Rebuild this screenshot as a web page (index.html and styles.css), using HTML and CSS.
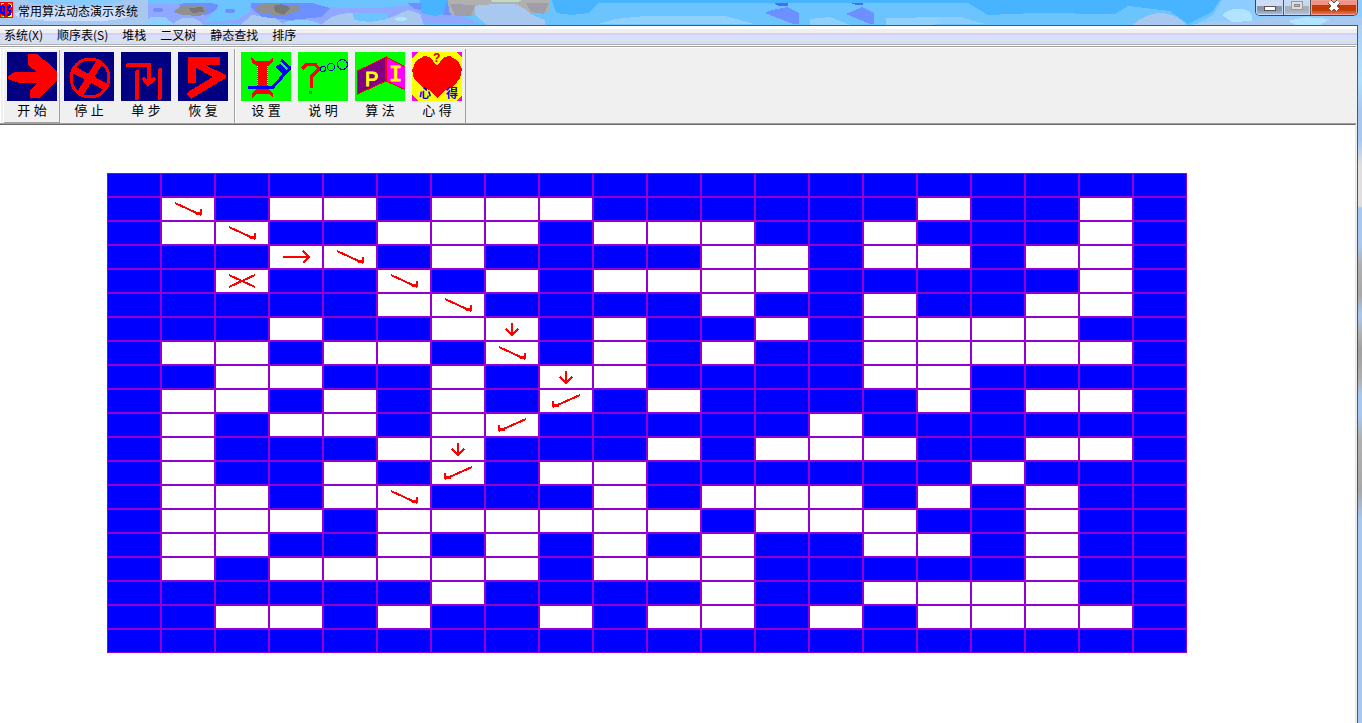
FILE: index.html
```html
<!DOCTYPE html>
<html lang="zh-CN">
<head>
<meta charset="utf-8">
<title>常用算法动态演示系统</title>
<link rel="stylesheet" href="styles.css">
</head>
<body>
<div class="desktop">
  <header class="titlebar">
    <svg class="glass" viewBox="0 0 1362 25" preserveAspectRatio="none" aria-hidden="true">
      <rect width="1362" height="25" fill="#6cc4ff"/>
      <path fill="#a8c8f0" d="M0 0H148V25H0z"/>
      <path fill="#88ccff" d="M25 0H125Q110 8 60 4Q40 6 25 0z"/>
      <path fill="#cfe0fb" d="M14 14Q30 4 70 7Q130 5 132 14Q125 22 80 21Q20 22 14 14z"/>
      <path fill="#90a8ff" d="M148 4H195L215 12L250 6L330 7Q360 10 400 6L440 5L480 24H148z"/>
      <path fill="#6cc4ff" d="M218 4H250V12L236 20L205 22L212 14z"/>
      <path fill="#a8c8f0" d="M172 25Q188 10 204 25zM240 25L252 15L275 18L285 25z"/>
      <path fill="#6c90ff" d="M178 4Q200 1 217 4Q221 10 206 15L188 12zM251 3H312L330 8L322 17L290 20L262 17L251 8z"/>
      <ellipse cx="158" cy="10" rx="5" ry="2" fill="#6c90ff"/>
      <ellipse cx="230" cy="11" rx="5" ry="2" fill="#6c90ff"/>
      <path fill="#909090" d="M173 12L181 6H203L207 11L200 16L182 15zM254 8L262 4L300 5L300 10L283 16L261 13z"/>
      <path fill="#787878" d="M189 8L203 7L204 12L192 13zM274 6Q283 2 290 8L284 15L275 12z"/>
      <path fill="#90d0ff" d="M143 25L150 17L165 17L175 25zM284 22Q310 17 322 25H284z"/>
      <path fill="#a8c8f0" d="M322 25Q332 13 352 13L390 18L408 10L420 14L424 25z"/>
      <path fill="#6cc4ff" d="M353 13H388V19L370 22L354 20z"/>
      <ellipse cx="401" cy="19" rx="6" ry="2" fill="#b0e4ff"/>
      <path fill="#48b4ff" d="M420 0H448V13L435 16L421 13zM552 0H1220L1212 12L1188 24L1170 11L1128 6L1115 14L1035 13L1005 16L988 15L967 3H598L588 13L572 15L556 13z"/>
      <path fill="#6cc4ff" d="M598 3H736L765 15V25H598zM799 3H818L846 15V25H799zM874 3H967L988 15L1005 25H874z"/>
      <path fill="#6c90ff" d="M407 3H421V10L415 9zM446 3H451V15L443 15z"/>
      <path fill="#b0b0b0" d="M448 0H550V10L540 14L530 13L520 5H478L474 15L455 16L449 12z"/>
      <path fill="#c0dcc0" d="M490 0H522L518 2H492z"/>
      <path fill="#a09ea8" d="M450 4L475 5L471 16L455 16zM526 3L549 3L544 14L531 12z"/>
      <path fill="#a8c8f0" d="M475 6Q483 4 515 4Q526 8 530 14L545 20V25H487L475 15z"/>
      <path fill="#90d0ff" d="M598 24L615 19L645 16H725L754 24zM810 25V19L830 17L850 25zM886 25V18L945 17L984 24zM940 18L978 24H940z"/>
      <path fill="#6c90ff" d="M772 10L787 7L799 13V24H793L765 13zM846 14L862 7L874 13V24H870z"/>
      <path fill="#486cff" d="M774 3H788V6H779zM850 3H863V5H856z"/>
      <path fill="#8cccff" d="M1222 0H1362V25H1195L1213 15zM940 3L967 4L988 16L984 24H940z"/>
      <path fill="#6cc4ff" d="M932 3H968L988 15L1035 13L1115 14L1128 7L1170 11L1140 22L1130 24H985L960 17H932z"/>
      <path fill="#a8c8f0" d="M1132 25Q1162 1 1187 25zM1190 25L1216 21L1253 20L1280 17H1362V25z"/>
      <path fill="#b0e4ff" d="M1222 15Q1228 8 1242 9Q1254 11 1252 21L1232 22zM1288 21L1305 17L1330 19L1320 25H1296z"/>
    </svg>
    <div class="title">
      <svg class="appicon" viewBox="0 0 13 16" aria-hidden="true">
        <path fill="#ffff00" d="M0 0H13V16H0z"/><path fill="#00ff00" d="M9 0H13V5zM0 12V16H4z"/>
        <path fill="none" stroke="#ff0000" d="M.5 .5H12.5V15.5H.5z"/>
        <ellipse cx="6" cy="8" rx="6" ry="7" fill="#ff0000"/>
        <path fill="none" stroke="#0000ff" stroke-width="2" d="M1 4V10L4 12V5L2 4M11 4L8 5V8L10 9V12L7 13"/>
      </svg>
      <span>常用算法动态演示系统</span>
    </div>
    <div class="caption">
      <button class="cap" aria-label="最小化"><svg width="27" height="15" viewBox="0 0 27 15"><path fill="#fff" stroke="#555" d="M8.500 6.500h11v4h-11z"/></svg></button>
      <button class="cap dim" aria-label="最大化"><svg width="26" height="15" viewBox="0 0 26 15"><path fill="#ddd" stroke="#999" d="M7.500 1.500h11v8h-11z"/><path fill="#bbb" stroke="#888" d="M10.500 4.500h5v2h-5z"/></svg></button>
      <button class="cap close" aria-label="关闭"><svg width="46" height="15" viewBox="0 0 46 15"><path fill="none" stroke="#555" stroke-width="5" d="M19 2L27 10M27 2L19 10"/><path fill="none" stroke="#fff" stroke-width="3" d="M19 2L27 10M27 2L19 10"/></svg></button>
    </div>
  </header>

  <div class="window">
    <nav class="menubar" aria-label="菜单">
      <button>系统(X)</button><button>顺序表(S)</button><button>堆栈</button><button>二叉树</button><button>静态查找</button><button>排序</button>
    </nav>

    <div class="toolbar" role="toolbar">
      <div class="group">
        <button class="tool raised">
          <svg viewBox="0 0 50 49"><rect width="50" height="49" fill="#000080"/><path fill="#f00" d="M21 2H31L35 7L42 11L50 20V28L39 39L33 46H23V39L30 31H12L1 27V24L8 20H30L21 13z"/></svg>
          <span>开 始</span></button>
        <button class="tool">
          <svg viewBox="0 0 50 49"><rect width="50" height="49" fill="#000080"/><g fill="none" stroke="#f00"><circle cx="26" cy="26" r="19" stroke-width="3"/><path stroke-width="7" d="M35 11L16 42M10 18L42 35"/></g></svg>
          <span>停 止</span></button>
        <button class="tool">
          <svg viewBox="0 0 50 49"><rect width="50" height="49" fill="#000080"/><path fill="none" stroke="#f00" stroke-width="4" stroke-linecap="round" d="M7 13H28V30M16 20V46M39 18V46M23 27L27 32L33 27"/><path fill="#f00" d="M22 27H34L28 34z"/></svg>
          <span>单 步</span></button>
        <button class="tool">
          <svg viewBox="0 0 50 49"><rect width="50" height="49" fill="#000080"/><path fill="#f00" d="M10 5H42V13H27L48 23V26L13 47L8 42L10 40L35 25L18 16V31H10z"/></svg>
          <span>恢 复</span></button>
      </div>
      <div class="group">
        <button class="tool">
          <svg viewBox="0 0 50 49"><rect width="50" height="49" fill="#0f0"/><path fill="#f00" d="M10 5L15 9H28L32 5V10L27 14V37L32 41V46L28 42H15L11 46V41L16 37V14L11 11z"/><path stroke="#ff0" stroke-dasharray="1 1" d="M16.500 14V34M26.500 14V34"/><path fill="none" stroke="#00f" stroke-width="3" d="M7 35H32L49 16L40 8M36 14L43 21M38 13L46 20"/></svg>
          <span>设 置</span></button>
        <button class="tool">
          <svg viewBox="0 0 50 49"><rect width="50" height="49" fill="#0f0"/><path fill="none" stroke="#f00" stroke-width="3" d="M4 17L9 12H17L21 17L13 25V36"/><path fill="none" stroke="#f00" d="M11.500 39.500h2v2h-2z"/><g fill="none" stroke="#0000c0"><circle cx="25" cy="17" r="2.500"/><circle cx="33" cy="15" r="3.500"/><circle cx="44.500" cy="12.500" r="5"/></g></svg>
          <span>说 明</span></button>
        <button class="tool">
          <svg viewBox="0 0 50 49"><rect width="50" height="49" fill="#0f0"/><g stroke="#f00"><path fill="#800080" d="M2.500 19L31 5V29L2.500 42z"/><path fill="#f0f" d="M31 5L51 15V38L31 29z"/></g><path stroke="#f00" stroke-width="2" d="M31 5V29"/><text class="letter" x="10" y="34">P</text><text class="letter serif" x="34" y="29">I</text></svg>
          <span>算 法</span></button>
        <button class="tool">
          <svg viewBox="0 0 50 49"><rect width="50" height="49" fill="#ff0"/><path fill="#f0f" d="M0 0H6L0 6zM44 0H50V6zM0 43L6 49H0zM50 43V49H44z"/><path fill="#f00" d="M25 14L18 5L12 4L4 9L0 18L2 27L10 35L19 39L25 46L32 39L42 34L48 26L50 17L46 9L38 4L32 5z"/><text class="mark" x="21" y="10">?</text><text class="ink" x="7" y="46">心</text><text class="ink" x="34" y="46">得</text></svg>
          <span>心 得</span></button>
      </div>
    </div>

    <main class="canvas"><div class="maze" id="maze" role="img" aria-label="迷宫"></div></main>
  </div>
</div>
<script src="maze.js"></script>
</body>
</html>
```

FILE: styles.css
```css
* { box-sizing: border-box; }

body {
  margin: 0;
  font-family: "Noto Sans CJK SC", sans-serif;
  font-size: 12px;
  color: #000;
}

button {
  margin: 0;
  padding: 0;
  border: 0;
  background: none;
  font: inherit;
  color: inherit;
}

svg { display: block; shape-rendering: crispEdges; }

.desktop {
  min-height: 100vh;
  display: flex;
  flex-direction: column;
  padding-right: 4px;
  background: linear-gradient(#a8c8f0 0, #b0e0ff 80px, #a8c8f0 110px, #a8c8f0 140px, #e0dede 165px, #e0dede 206px, #a8c8f0 208px, #a8c8f0 245px, #b0b0b0 265px, #a8a8a8 295px, #a8c8f0 315px, #b0b0b0 335px, #a0a0a0 350px, #b0b0b0 380px, #a8c8f0 395px, #a8c8f0 415px, #b0b0b0 440px, #a8a8a8 490px, #a8c8f0 520px);
}

.titlebar {
  position: relative;
  height: 25px;
  margin-right: -4px;
  display: flex;
  justify-content: space-between;
  align-items: flex-start;
  overflow: hidden;
}

.glass { position: absolute; inset: 0; width: 100%; height: 100%; }

.title {
  position: relative;
  display: flex;
  align-items: center;
  gap: 5px;
  height: 20px;
}

.appicon { width: 13px; height: 16px; }

.caption {
  position: relative;
  display: flex;
  margin-right: 4px;
  border: 1px solid #444;
  border-top: 0;
  border-radius: 0 0 5px 5px;
  overflow: hidden;
}

.cap { background: linear-gradient(#d0dcf4 0 6px, #8c94a8 6px 10px, #a8c8f0); box-shadow: inset 0 0 0 1px #c8dcf8; }
.cap + .cap { border-left: 1px solid #555; }
.dim { background: linear-gradient(#c8d8f0 0 6px, #a8b0c0 6px 11px, #b8c8dc); }
.close { background: linear-gradient(#f09088 0 5px, #c03c00 5px 10px, #e86850 13px); box-shadow: inset 0 0 0 1px #f0a090; }

.window {
  flex: 1;
  display: flex;
  flex-direction: column;
  border-top: 1px solid #555;
  border-right: 1px solid #555;
  background: #f0f0f0;
}

.menubar {
  height: 20px;
  display: flex;
  align-items: center;
  padding-left: 4px;
  padding-bottom: 3px;
  gap: 14px;
  background: linear-gradient(#fff 0 3px, #f0f0f0 3px 7px, #d4d0f8 7px 9px, #d4e0fc 9px 14px, #e0e0e4 14px 15px, #d0e0fc 15px 18px, #b0b0b0 18px 19px, #fff 19px);
}

.toolbar {
  display: flex;
  border-top: 1px solid #a0a0a0;
  border-bottom: 1px solid #a0a0a0;
  box-shadow: inset 0 1px #fff;
  padding-top: 2px;
  margin-right: 1px;
}

.group {
  display: flex;
  padding: 0 3px 0 2px;
  height: 74px;
  border-left: 1px solid #fff;
  border-right: 1px solid #a0a0a0;
}

.group + .group { padding: 0 0 0 1px; }

.tool {
  width: 57px;
  display: flex;
  flex-direction: column;
  align-items: center;
  padding: 3px 3px 0 4px;
  font-family: "Liberation Sans", "Noto Sans CJK SC", sans-serif;
  font-size: 13px;
  line-height: 20px;
}

.tool svg { width: 50px; height: 49px; }

.raised { box-shadow: inset 1px 1px #fff, inset -1px -1px #a0a0a0; }

.letter { font: 20px "Liberation Sans", sans-serif; fill: #ff0; stroke: #ff0; }
.serif { font: 22px "Liberation Mono", monospace; }
.mark { font: bold 12px "Liberation Sans", sans-serif; fill: #c00000; }
.ink { font: bold 12px "Noto Sans CJK SC", sans-serif; fill: #00f; }

.canvas {
  flex: 1;
  margin-right: 1px;
  padding: 48px 107px;
  background: #fff;
  border-top: 1px solid #696969;
  border-right: 1px solid #e3e3e3;
}

.maze {
  display: grid;
  grid-template-columns: repeat(20, 54px);
  grid-auto-rows: 24px;
}

.cell { border: 1px solid #9400d3; background: #fff; }
.wall { background: #00f; }
.cell svg { width: 52px; height: 22px; fill: none; stroke: #f00; stroke-width: 2; }
```

FILE: maze.js
```js
// '#' wall, '.' open, d/r/s/l step directions, x dead end
const rows = [
  "####################",
  "#d#..#...######.##.#",
  "#.d##...#...##.###.#",
  "###rd#.####..#..#..#",
  "##x##d#.#....#####.#",
  "#####.d####.##.##..#",
  "###.##.s#.##.#....##",
  "#..#..#d#.#.##.....#",
  "##..##.#s.####..####",
  "#..#.#.#l#.####.#..#",
  "#.#..#.l#####.######",
  "#.###.s###.#...##..#",
  "#.##.#l#..######.###",
  "#..#.d###.#...#.#.##",
  "#...#......#...##.##",
  "#..##.#.#.#.##..#.##",
  "#.#.....#...#####.##",
  "######.####.##....##",
  "##..#.##.#..#.#....#",
  "####################"
];
const marks = {
  d: "M14 6L40 18M40 12V18M35 17H41M37 16H41",
  r: "M14 12H40M34 6L40 12L34 18",
  s: "M27 6V18M21 12L27 18L33 12",
  l: "M41 6L14 18M14 12V18M13 17H20M14 16H18",
  x: "M14 6L40 18M40 6L14 18"
};
document.getElementById("maze").innerHTML = rows.join("").split("").map(c =>
  `<div class="cell${c === "#" ? " wall" : ""}">` +
  (marks[c] ? `<svg viewBox="1 1 52 22"><path d="${marks[c]}"/></svg>` : "") +
  "</div>").join("");
```
